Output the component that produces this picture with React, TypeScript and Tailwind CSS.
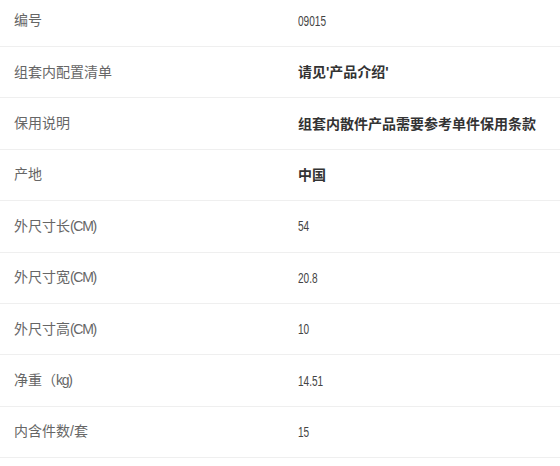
import React from "react";

type Row = {
  label: string;
  value: string;
  bold?: boolean;
};

const rows: Row[] = [
  { label: "编号", value: "09015" },
  { label: "组套内配置清单", value: "请见'产品介绍'", bold: true },
  { label: "保用说明", value: "组套内散件产品需要参考单件保用条款", bold: true },
  { label: "产地", value: "中国", bold: true },
  { label: "外尺寸长(CM)", value: "54" },
  { label: "外尺寸宽(CM)", value: "20.8" },
  { label: "外尺寸高(CM)", value: "10" },
  { label: "净重（kg)", value: "14.51" },
  { label: "内含件数/套", value: "15" },
];

// latin runs in the labels are set in a narrow face, squeeze them
const Label = ({ text }: { text: string }) => {
  const parts = text.split(/([A-Za-z()]+)/).filter(Boolean);
  return (
    <>
      {parts.map((p, i) =>
        /^[A-Za-z()]+$/.test(p) ? (
          <span key={i} className="tracking-[-1.3px]">
            {p}
          </span>
        ) : (
          <span key={i}>{p}</span>
        )
      )}
    </>
  );
};

const App = () => {
  return (
    <div
      className="w-[560px] h-[466px] overflow-hidden bg-white"
      style={{ fontFamily: '"Liberation Sans", "Noto Sans CJK SC", sans-serif' }}
    >
      <div className="-mt-[4.4px]">
        {rows.map((row, index) => (
          <div
            key={index}
            className="grid grid-cols-[284px_1fr] items-center h-[51.4px] border-b border-[#efefef]"
          >
            <div className="pl-[14px] text-[14px] text-[#666666]">
              <Label text={row.label} />
            </div>
            <div className="pl-[14px]">
              {row.bold ? (
                <span className="text-[14px] font-bold text-[#333333]">{row.value}</span>
              ) : (
                <span className="inline-block origin-left scale-x-[0.72] text-[14px] text-[#444444]">
                  {row.value}
                </span>
              )}
            </div>
          </div>
        ))}
      </div>
    </div>
  );
};

export default App;
